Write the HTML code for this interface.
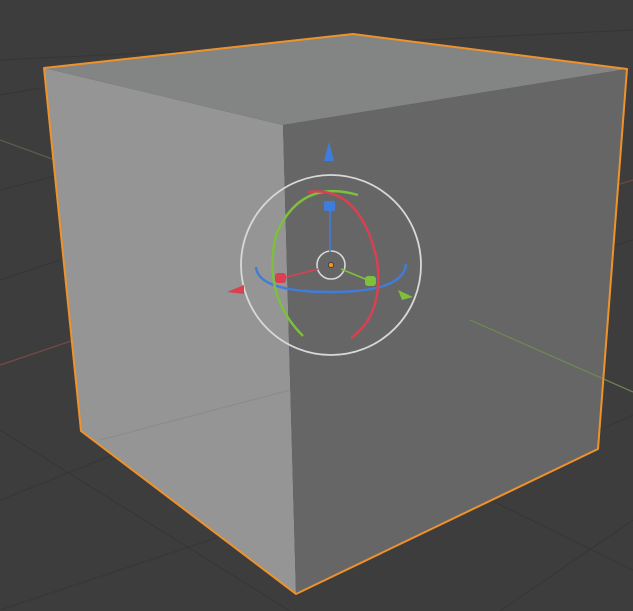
<!DOCTYPE html>
<html><head><style>html,body{margin:0;padding:0;background:#3d3d3d;width:633px;height:611px;overflow:hidden}</style></head>
<body>
<svg width="633" height="611" viewBox="0 0 633 611" xmlns="http://www.w3.org/2000/svg">
<rect width="633" height="611" fill="#3d3d3d"/>
<g stroke="#363636" stroke-width="1" fill="none">
<line x1="0" y1="430" x2="290" y2="611"/>
<line x1="0" y1="500" x2="300" y2="380"/>
<line x1="0" y1="190" x2="60" y2="175"/>
<line x1="0" y1="280" x2="60" y2="260"/>
<line x1="0" y1="610" x2="330" y2="500"/>
<line x1="600" y1="250" x2="633" y2="240"/>
<line x1="600" y1="430" x2="633" y2="415"/>
<line x1="470" y1="490" x2="633" y2="570"/>
<line x1="500" y1="611" x2="633" y2="520"/>
<line x1="0" y1="60" x2="633" y2="30"/>
<line x1="0" y1="95" x2="40" y2="88"/>
</g>
<line x1="0" y1="365" x2="160" y2="311" stroke="#7a4a45" stroke-width="1.2"/>
<line x1="0" y1="140" x2="55" y2="160" stroke="#56604a" stroke-width="1.2"/>
<line x1="600" y1="190" x2="633" y2="180" stroke="#6a4a40" stroke-width="1.2"/>
<polygon points="44,68 353,34 627,69 283,125" fill="#838484"/>
<polygon points="44,68 283,125 296,594 81,431" fill="#949594"/>
<polygon points="283,125 627,69 598,449 296,594" fill="#666666"/>
<line x1="470" y1="320" x2="633" y2="392" stroke="#6f8a50" stroke-width="1.2"/>
<line x1="100" y1="440" x2="290" y2="390" stroke="#8a8a8a" stroke-width="1"/>
<polygon points="44,68 353,34 627,69 598,449 296,594 81,431" fill="none" stroke="#f0922c" stroke-width="2" stroke-linejoin="round"/>
<circle cx="331" cy="265" r="90" fill="none" stroke="#d8d8d8" stroke-width="1.8"/>
<circle cx="331" cy="265" r="14" fill="none" stroke="#d8d8d8" stroke-width="1.6"/>
<path d="M256 267 Q258 292 331 292 Q404 292 406 264" fill="none" stroke="#3f7ddd" stroke-width="2.4"/>
<path d="M358 195 Q300 178 276 235 Q262 295 303 336" fill="none" stroke="#7cc03c" stroke-width="2.4"/>
<path d="M308 192 Q360 185 377 260 Q384 315 351 338" fill="none" stroke="#dc4050" stroke-width="2.4"/>
<line x1="330" y1="210" x2="330" y2="252" stroke="#3f7ddd" stroke-width="1.6"/>
<rect x="324" y="201" width="11" height="10" rx="2" fill="#3f7ddd"/>
<polygon points="329,142 324,161 334,161" fill="#3f7ddd"/>
<line x1="283" y1="278" x2="318" y2="269" stroke="#dc4050" stroke-width="1.6"/>
<rect x="275" y="273" width="11" height="10" rx="3" fill="#dc4050"/>
<polygon points="227,292 244,285 244,294" fill="#dc4050"/>
<line x1="341" y1="269" x2="370" y2="281" stroke="#7cc03c" stroke-width="1.6"/>
<rect x="365" y="276" width="11" height="10" rx="3" fill="#7cc03c"/>
<polygon points="413,297 398,290 402,300" fill="#7cc03c"/>
<circle cx="331" cy="265" r="2.6" fill="#f0922c" stroke="#222" stroke-width="0.6"/>
</svg>
</body></html>
